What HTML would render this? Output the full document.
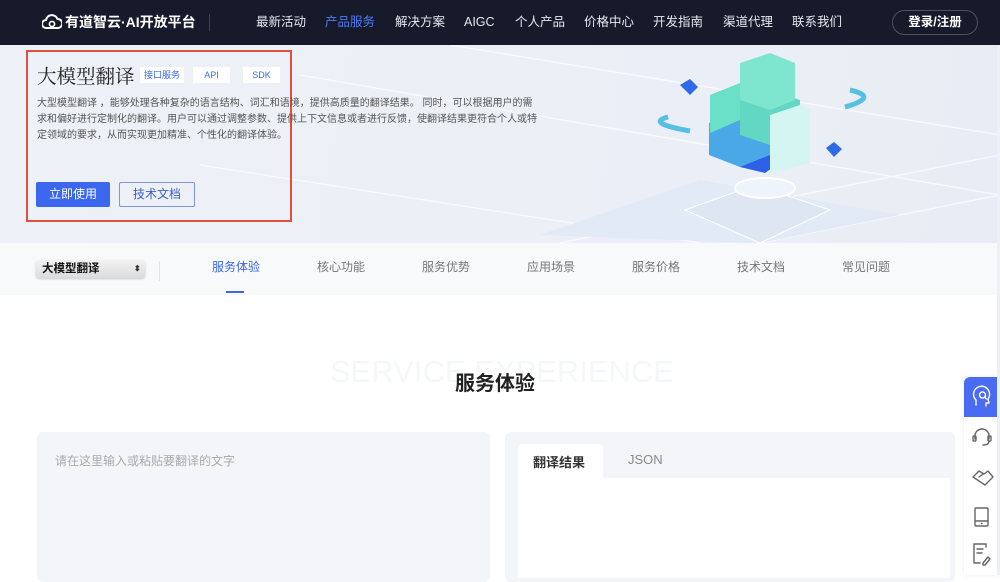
<!DOCTYPE html>
<html><head><meta charset="utf-8"><style>
*{margin:0;padding:0;box-sizing:border-box}
body{width:1000px;height:575px;overflow:hidden;background:#fff;font-family:"Liberation Sans","Noto Sans CJK SC",sans-serif;position:relative}
.nav{position:absolute;left:0;top:0;width:1000px;height:45px;background:#161a2b}
.nav span{position:absolute;top:12px;font-size:12.5px;line-height:20px;height:20px;color:#e6e8ee}
.hero{position:absolute;left:0;top:45px;width:1000px;height:198px;background:linear-gradient(100deg,#eef1f7 0%,#eceff6 50%,#e8edf5 100%)}
.tabs{position:absolute;left:0;top:243px;width:1000px;height:52px;background:#f8f9fb}
.tabs span{position:absolute;top:15px;font-size:12px;line-height:18px;color:#777}
.abs{position:absolute}
</style></head><body>
<div class="nav">
  <svg class="abs" style="left:42px;top:13px" width="20" height="18" viewBox="0 0 20 18"><path d="M4 15a4 4 0 0 1 0-8 6 6 0 0 1 11.5-1A4.5 4.5 0 0 1 16 15z" fill="none" stroke="#fff" stroke-width="2"/><circle cx="10" cy="11" r="2.6" fill="none" stroke="#fff" stroke-width="1.6"/></svg>
  <span style="left:65px;font-size:14px;font-weight:bold;color:#fff">有道智云·AI开放平台</span>
  <div class="abs" style="left:209px;top:14px;width:1px;height:17px;background:#3a3f52"></div>
  <span style="left:256px">最新活动</span>
  <span style="left:325px;color:#4d7cf5">产品服务</span>
  <span style="left:395px">解决方案</span>
  <span style="left:464px">AIGC</span>
  <span style="left:515px">个人产品</span>
  <span style="left:584px">价格中心</span>
  <span style="left:653px">开发指南</span>
  <span style="left:723px">渠道代理</span>
  <span style="left:792px">联系我们</span>
  <div class="abs" style="left:892px;top:10px;width:86px;height:25px;border:1px solid #4a5066;border-radius:13px;color:#fff;font-size:12.5px;font-weight:bold;text-align:center;line-height:23px">登录/注册</div>
</div>
<div class="hero">
  <svg class="abs" style="left:0;top:0" width="1000" height="198"><g stroke="#fff" stroke-width="1.2" opacity=".7" fill="none"><path d="M300 30 L1000 150"/><path d="M450 0 L1000 90"/><path d="M200 120 L700 198"/><path d="M560 198 L1000 110"/><path d="M760 198 L1000 150"/></g>
  <polygon points="540,190 700,135 900,170 760,198" fill="#e2eaf5"/>
  <polygon points="685,165 755,140 830,165 760,198" fill="#dde6f1" stroke="#fff"/>
  <ellipse cx="765" cy="143" rx="30" ry="10" fill="#eef4fb" stroke="#fff" stroke-width="2"/>
  <polygon points="735,110 765,98 790,110 765,128 740,122" fill="#2e5fe8"/>
  <polygon points="709,78 740,66 770,78 770,110 740,122 709,110" fill="#4aa8e6"/>
  <polygon points="740,55 770,45 800,55 800,90 770,100 740,90" fill="#62d7c4"/>
  <polygon points="710,50 740,38 740,75 710,88" fill="#6be0c8"/>
  <polygon points="740,18 770,8 795,18 795,55 770,65 740,55" fill="#7ee6cf"/>
  <polygon points="770,70 800,60 810,65 810,118 770,128" fill="#d5f5f2"/>
  <polygon points="680,40 690,34 698,42 690,50" fill="#2f6ae8"/>
  <polygon points="826,103 834,97 842,104 834,112" fill="#2f6ae8"/>
  <path d="M850 45 Q880 52 845 62" stroke="#56bfe4" stroke-width="5" fill="none"/>
  <path d="M668 72 Q645 78 690 86" stroke="#56bfe4" stroke-width="5" fill="none"/>
  </svg>
  <div class="abs" style="left:26px;top:5px;width:266px;height:172px;border:2px solid #e0503c"></div>
  <div class="abs" style="left:37px;top:16px;font-size:19.5px;line-height:28px;color:#222;font-family:'Noto Serif CJK SC',serif">大模型翻译</div>
  <div class="abs" style="left:140px;top:22px;width:44px;height:16px;background:#fff;font-size:9px;color:#3a6ae8;text-align:center;line-height:16px">接口服务</div>
  <div class="abs" style="left:193px;top:22px;width:37px;height:16px;background:#fff;font-size:9px;color:#3a6ae8;text-align:center;line-height:16px">API</div>
  <div class="abs" style="left:243px;top:22px;width:37px;height:16px;background:#fff;font-size:9px;color:#3a6ae8;text-align:center;line-height:16px">SDK</div>
  <div class="abs" style="left:37px;top:51px;width:500px;font-size:10px;line-height:16px;color:#555">大型模型翻译 ，能够处理各种复杂的语言结构、词汇和语境，提供高质量的翻译结果。 同时，可以根据用户的需求和偏好进行定制化的翻译。用户可以通过调整参数、提供上下文信息或者进行反馈，使翻译结果更符合个人或特定领域的要求，从而实现更加精准、个性化的翻译体验。</div>
  <div class="abs" style="left:36px;top:137px;width:74px;height:25px;background:#3a67ee;border-radius:2px;color:#fff;font-size:12px;text-align:center;line-height:25px">立即使用</div>
  <div class="abs" style="left:119px;top:137px;width:76px;height:25px;border:1px solid #7f96d8;border-radius:2px;color:#3a5fc8;font-size:12px;text-align:center;line-height:23px">技术文档</div>
</div>
<div class="tabs">
  <div class="abs" style="left:36px;top:17px;width:109px;height:18px;background:linear-gradient(#f2f2f2,#dcdcdc);border-radius:3px;box-shadow:0 1px 2px rgba(0,0,0,.2);font-size:11.5px;font-weight:bold;color:#111;padding-left:6px;line-height:18px">大模型翻译<span style="position:absolute;left:98px;top:0;font-size:8px;line-height:18px;color:#333">⬍</span></div>
  <div class="abs" style="left:159px;top:18px;width:1px;height:20px;background:#e2e4e8"></div>
  <span style="left:212px;color:#3a67ee">服务体验</span>
  <div class="abs" style="left:226px;top:48px;width:18px;height:2px;background:#3a67ee"></div>
  <span style="left:317px">核心功能</span>
  <span style="left:422px">服务优势</span>
  <span style="left:527px">应用场景</span>
  <span style="left:632px">服务价格</span>
  <span style="left:737px">技术文档</span>
  <span style="left:842px">常见问题</span>
</div>
<div class="abs" style="left:330px;top:354px;font-size:31px;line-height:36px;color:#f6f7f9">SERVICE EXPERIENCE</div>
<div class="abs" style="left:455px;top:370px;font-size:20px;line-height:28px;font-weight:bold;color:#222">服务体验</div>
<div class="abs" style="left:37px;top:432px;width:453px;height:150px;background:#f3f5f8;border-radius:6px"></div>
<div class="abs" style="left:55px;top:452px;font-size:12px;color:#aaa">请在这里输入或粘贴要翻译的文字</div>
<div class="abs" style="left:505px;top:432px;width:450px;height:150px;background:#f3f5f8;border-radius:6px"></div>
<div class="abs" style="left:518px;top:444px;width:85px;height:40px;background:#fff;border-radius:4px 4px 0 0"></div>
<div class="abs" style="left:518px;top:478px;width:432px;height:100px;background:#fff"></div>
<div class="abs" style="left:533px;top:452px;font-size:13px;font-weight:bold;color:#333">翻译结果</div>
<div class="abs" style="left:628px;top:452px;font-size:13px;color:#888">JSON</div>
<div class="abs" style="left:964px;top:377px;width:36px;height:198px;background:#fff;box-shadow:0 0 4px rgba(0,0,0,.08)"></div>
<div class="abs" style="left:964px;top:377px;width:36px;height:40px;background:#4a6cf2;border-radius:6px 0 0 0"></div>
<svg class="abs" style="left:964px;top:377px" width="36" height="198" fill="none" stroke-width="1.4" stroke-linecap="round" stroke-linejoin="round">
 <g stroke="#fff"><path d="M12 28 v-5 a8 8 0 1 1 12 -1 l1 4 h-3 v3"/><circle cx="18.5" cy="18" r="3"/><path d="M20.5 20 l2 2"/></g>
 <g stroke="#666"><path d="M11 62 v-3 a7 7 0 0 1 14 0 v3"/><rect x="9" y="59" width="3" height="5" rx="1"/><rect x="24" y="59" width="3" height="5" rx="1"/><path d="M25 64 q0 4 -6 4"/>
 <path d="M9 100 l6-6 l5 3 l4-3 l5 6 l-8 8 z"/><path d="M15 100 l4 -3"/>
 <rect x="11" y="131" width="13" height="18" rx="1"/><path d="M11 144 h13"/><path d="M17.5 146.5 h.5"/>
 <path d="M22 170 v-3 h-12 v19 h6"/><path d="M13 172 h6 M13 176 h5"/><path d="M19 186 l5 -6 l2 2 l-5 6 h-2z"/></g>
</svg>
<div class="abs" style="left:997px;top:45px;width:3px;height:530px;background:#eef0f3"></div>
</body></html>
